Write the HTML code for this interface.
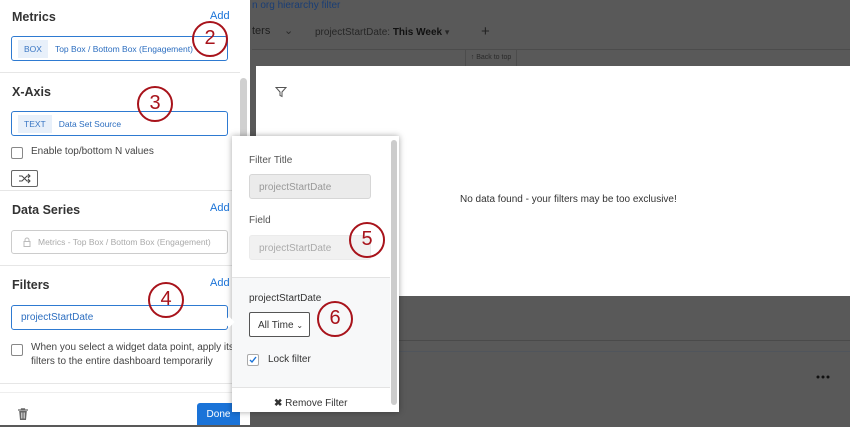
<!DOCTYPE html>
<html><head><style>
*{box-sizing:border-box;margin:0;padding:0}
body{width:850px;height:425px;overflow:hidden;background:#595959;font-family:"Liberation Sans",sans-serif;position:relative}
.a{position:absolute}
svg{display:block}
.h{font-size:12.5px;font-weight:bold;color:#333}
.add{font-size:11px;color:#1a73d8}
.box{border:1px solid #2e7ad1;border-radius:3px;background:#fff;display:flex;align-items:center;padding-left:6px}
.tag{background:#e8f0fa;color:#3b77c4;font-size:8.5px;padding:4px 6px;margin-right:7px}
.sep{height:1px;background:#e6e6e6;left:0;width:240px}
.circ{width:36px;height:36px;border:2.5px solid #a8131b;border-radius:50%;color:#a8131b;font-size:20px;text-align:center;line-height:31px}
.cb{width:12px;height:12px;border:1px solid #888;border-radius:2px;background:#fff}
.lbl{font-size:10px;color:#555}
</style></head><body>
<div class="a" style="left:252px;top:0;font-size:10px;color:#1a3e75">n org hierarchy filter</div>
<div class="a" style="left:252px;top:25px;font-size:11px;color:#1e1e1e">ters</div>
<div class="a" style="left:284px;top:24px;font-size:11px;color:#2a2a2a">⌄</div>
<div class="a" style="left:315px;top:27px;font-size:10px;color:#262626">projectStartDate: <b style="color:#111">This Week</b> <span style="font-size:9px">▾</span></div>
<div class="a" style="left:481px;top:23px;font-size:15px;color:#222">+</div>
<div class="a" style="left:252px;top:49px;width:598px;height:1px;background:#4c4c4c"></div>
<div class="a" style="left:465px;top:49px;width:52px;height:17px;border-left:1px solid #4c4c4c;border-right:1px solid #4c4c4c;font-size:7px;color:#2a2a2a;text-align:center;line-height:17px">↑ Back to top</div>
<div class="a" style="left:256px;top:66px;width:594px;height:230px;background:#fff"></div>
<svg class="a" style="left:275px;top:86px" width="12" height="12" viewBox="0 0 12 12"><path d="M1 1.5h10L7 6v4.5L5 9.5V6z" fill="none" stroke="#555" stroke-width="1"/></svg>
<div class="a" style="left:460px;top:194px;font-size:10px;color:#333">No data found - your filters may be too exclusive!</div>
<div class="a" style="left:256px;top:340px;width:594px;height:1px;background:#4a4a4a"></div>
<div class="a" style="left:256px;top:351px;width:594px;height:1px;background:#50555c"></div>
<svg class="a" style="left:816px;top:375px" width="14" height="4"><circle cx="2" cy="2" r="1.5" fill="#111"/><circle cx="7" cy="2" r="1.5" fill="#111"/><circle cx="12" cy="2" r="1.5" fill="#111"/></svg>
<div class="a" style="left:0;top:0;width:250px;height:425px;background:#fff"></div>
<div class="a" style="left:240px;top:78px;width:7px;height:300px;background:#d0d0d0;border-radius:4px"></div>
<div class="a h" style="left:12px;top:10px">Metrics</div>
<div class="a add" style="left:210px;top:10px">Add</div>
<div class="a box" style="left:11px;top:36px;width:217px;height:25px"><span class="tag">BOX</span><span style="font-size:8.5px;color:#2c6ec0">Top Box / Bottom Box (Engagement)</span></div>
<div class="a sep" style="top:72px"></div>
<div class="a h" style="left:12px;top:85px">X-Axis</div>
<div class="a box" style="left:11px;top:111px;width:217px;height:25px"><span class="tag">TEXT</span><span style="font-size:8.5px;color:#2c6ec0">Data Set Source</span></div>
<div class="a cb" style="left:11px;top:147px"></div>
<div class="a lbl" style="left:31px;top:146px;color:#444">Enable top/bottom N values</div>
<div class="a" style="left:11px;top:170px;width:27px;height:17px;border:1px solid #666;border-radius:2px"><svg width="25" height="15" viewBox="0 0 25 15"><path d="M7 5h3l5 5h3M7 10h3l5-5h3M16 3l2 2-2 2M16 8l2 2-2 2" fill="none" stroke="#444" stroke-width="1"/></svg></div>
<div class="a sep" style="top:190px"></div>
<div class="a h" style="left:12px;top:203px">Data Series</div>
<div class="a add" style="left:210px;top:202px">Add</div>
<div class="a" style="left:11px;top:230px;width:217px;height:24px;border:1px solid #ccc;border-radius:3px;display:flex;align-items:center;padding-left:11px"><svg width="8" height="10" viewBox="0 0 8 10" style="margin-right:7px"><rect x="1" y="4.5" width="6" height="5" fill="none" stroke="#bbb"/><path d="M2 4.5V3a2 2 0 0 1 4 0v1.5" fill="none" stroke="#bbb"/></svg><span style="font-size:8.5px;color:#aaa">Metrics - Top Box / Bottom Box (Engagement)</span></div>
<div class="a sep" style="top:265px"></div>
<div class="a h" style="left:12px;top:278px">Filters</div>
<div class="a add" style="left:210px;top:277px">Add</div>
<div class="a box" style="left:11px;top:305px;width:217px;height:25px;padding-left:9px"><span style="font-size:10px;color:#2c6ec0">projectStartDate</span></div>
<div class="a cb" style="left:11px;top:344px"></div>
<div class="a lbl" style="left:31px;top:341px;color:#444;line-height:14px;width:205px">When you select a widget data point, apply its filters to the entire dashboard temporarily</div>
<div class="a sep" style="top:383px"></div>
<div class="a" style="left:0;top:392px;width:250px;height:1px;background:#eee"></div>
<svg class="a" style="left:18px;top:408px" width="10" height="12" viewBox="0 0 10 12"><path d="M0 2h10M3.5 2V.8h3V2" fill="none" stroke="#666" stroke-width="1.2"/><path d="M1.2 3h7.6L8 12H2z" fill="#666"/><path d="M3.5 4.5v6M5 4.5v6M6.5 4.5v6" stroke="#fff" stroke-width=".6"/></svg>
<div class="a" style="left:197px;top:403px;width:43px;height:22px;background:#1a73d8;border-radius:3px 3px 0 0;color:#fff;font-size:10px;text-align:center;line-height:24px">Done</div>
<div class="a" style="left:232px;top:136px;width:167px;height:276px;background:#fff;box-shadow:0 0 6px rgba(0,0,0,.35)"></div>
<div class="a" style="left:232px;top:277px;width:158px;height:111px;background:#f7f8f9;border-top:1px solid #e3e3e3;border-bottom:1px solid #e3e3e3"></div>
<div class="a" style="left:391px;top:140px;width:6px;height:265px;background:#ccc;border-radius:3px"></div>
<div class="a lbl" style="left:249px;top:155px">Filter Title</div>
<div class="a" style="left:249px;top:174px;width:122px;height:25px;background:#ebebeb;border:1px solid #d6d6d6;border-radius:3px;font-size:10px;color:#999;padding:7px 9px">projectStartDate</div>
<div class="a lbl" style="left:249px;top:215px">Field</div>
<div class="a" style="left:249px;top:235px;width:122px;height:25px;background:#f1f1f1;border:1px solid #ebebeb;border-radius:3px;font-size:10px;color:#aaa;padding:7px 9px">projectStartDate</div>
<div class="a lbl" style="left:249px;top:293px;color:#333">projectStartDate</div>
<div class="a" style="left:249px;top:312px;width:61px;height:25px;border:1px solid #555;border-radius:2px;background:#fff;font-size:10px;color:#333;padding:7px 0 0 8px;white-space:nowrap">All Time <span style="font-size:8px">⌄</span></div>
<div class="a" style="left:247px;top:354px;width:12px;height:12px;border:1px solid #aaa;border-radius:2px;background:#fff"><svg width="10" height="10" viewBox="0 0 10 10"><path d="M2 5l2 2 4-5" fill="none" stroke="#1a73d8" stroke-width="1.4"/></svg></div>
<div class="a lbl" style="left:268px;top:354px;color:#333">Lock filter</div>
<div class="a" style="left:274px;top:398px;font-size:10px;color:#333"><b>✖</b> Remove Filter</div>
<div class="a" style="left:225px;top:318px;width:8px;height:8px;background:#fff;transform:rotate(45deg)"></div>
<div class="a circ" style="left:192px;top:21px">2</div>
<div class="a circ" style="left:137px;top:86px">3</div>
<div class="a circ" style="left:148px;top:282px">4</div>
<div class="a circ" style="left:349px;top:222px">5</div>
<div class="a circ" style="left:317px;top:301px">6</div>
</body></html>
